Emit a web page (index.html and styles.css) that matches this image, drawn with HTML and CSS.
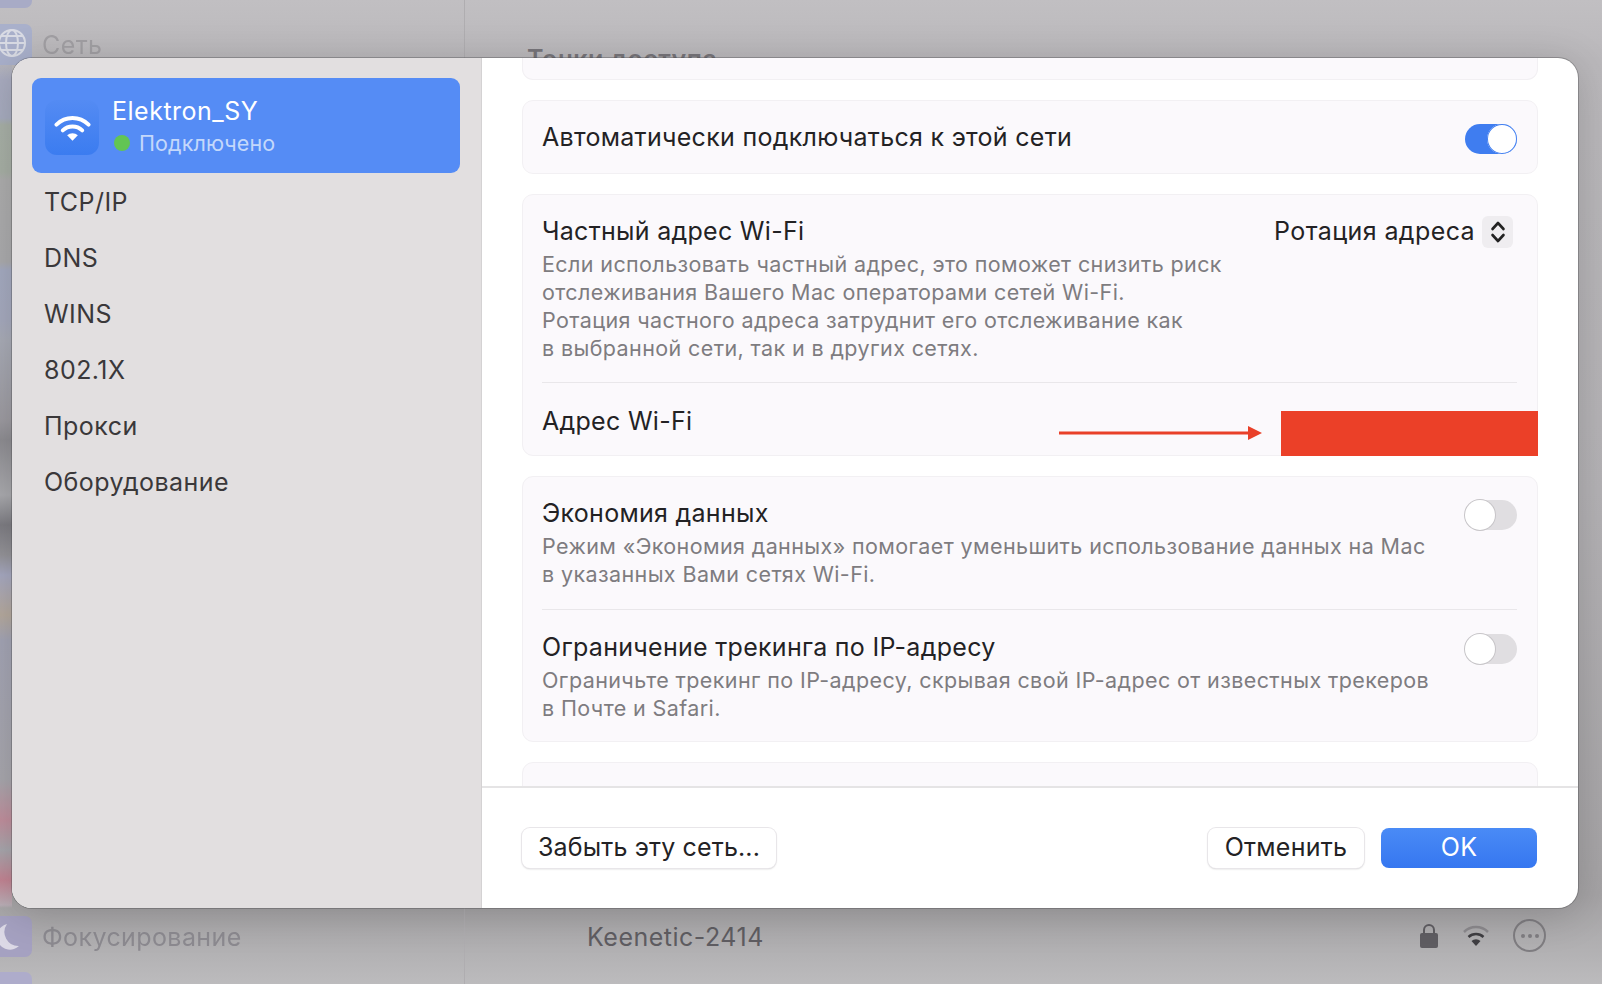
FILE: index.html
```html
<!DOCTYPE html>
<html lang="ru">
<head>
    <meta charset="UTF-8">
    <meta name="viewport" content="width=device-width, initial-scale=1.0">
    <title>Wi-Fi</title>
    <link rel="stylesheet" href="styles.css">
</head>
<body>

    <!-- окно настроек за диалогом -->
    <div class="backdrop">
        <div class="back-side">
            <div class="back-side-group">
                <div class="back-stub back-stub-top"></div>
                <div class="back-side-item back-side-net">
                    <svg class="back-icon" viewBox="0 0 32 41"><rect x="-8" width="40" height="41" rx="7" fill="#a9b0cb"/><g fill="none" stroke="#d9dbe4" stroke-width="2"><circle cx="12" cy="19" r="13"/><ellipse cx="12" cy="19" rx="6" ry="13"/><path d="M-1 19h26M1 12h22M1 26h22"/></g></svg>
                    <span>Сеть</span>
                </div>
            </div>
            <div class="back-side-group">
                <div class="back-side-item back-side-focus">
                    <svg class="back-icon" viewBox="0 0 32 41"><rect x="-8" width="40" height="41" rx="7" fill="#a5a1c1"/><path d="M7 8a13 13 0 1 0 12 22A14 14 0 0 1 7 8z" fill="#dcd9e6"/></svg>
                    <span>Фокусирование</span>
                </div>
                <div class="back-stub back-stub-bottom"></div>
            </div>
        </div>
        <div class="back-main">
            <div class="back-heading">Точки доступа</div>
            <div class="back-row">
                <span>Keenetic-2414</span>
                <div class="back-row-icons">
                    <svg class="icon-lock" viewBox="0 0 20 26"><path d="M5 11V7a5 5 0 0 1 10 0v4" fill="none" stroke="#5f5d62" stroke-width="2"/><rect x="1" y="10" width="18" height="15" rx="2" fill="#5f5d62"/></svg>
                    <svg class="icon-net" viewBox="0 0 28 22"><path d="M2 7a17 17 0 0 1 24 0" fill="none" stroke="#8b898d" stroke-width="2.5"/><path d="M6.500 12a11 11 0 0 1 15 0" fill="none" stroke="#3f3e42" stroke-width="2.500"/><path d="M14 21l-4.500-5a6.500 6.500 0 0 1 9 0z" fill="#3f3e42"/></svg>
                    <div class="icon-more"><i></i><i></i><i></i></div>
                </div>
            </div>
        </div>
    </div>

    <div class="dialog">
        <aside class="sidebar">
            <div class="network">
                <div class="network-icon">
                    <svg viewBox="0 0 38 28"><path d="M2.500 10.500a23.500 23.500 0 0 1 33 0" fill="none" stroke="#fff" stroke-width="4" stroke-linecap="round"/><path d="M9 16.500a14.500 14.500 0 0 1 20 0" fill="none" stroke="#fff" stroke-width="4" stroke-linecap="round"/><path d="M19 27l-5.500-5.500a8 8 0 0 1 11 0z" fill="#fff"/></svg>
                </div>
                <div class="network-text">
                    <div class="network-name">Elektron_SY</div>
                    <div class="network-status"><span class="status-dot"></span>Подключено</div>
                </div>
            </div>
            <nav class="side-nav">
                <a>TCP/IP</a>
                <a>DNS</a>
                <a>WINS</a>
                <a>802.1X</a>
                <a>Прокси</a>
                <a>Оборудование</a>
            </nav>
        </aside>

        <section class="content">
            <div class="scroll">
                <div class="card card-stub-top"></div>

                <div class="card">
                    <div class="row row-auto">
                        <div class="row-title">Автоматически подключаться к этой сети</div>
                        <span class="toggle toggle-on"></span>
                    </div>
                </div>

                <div class="card">
                    <div class="row row-private">
                        <div class="row-text">
                            <div class="row-title">Частный адрес Wi-Fi</div>
                            <p class="row-desc">Если использовать частный адрес, это поможет снизить риск<br>отслеживания Вашего Mac операторами сетей Wi-Fi.<br>Ротация частного адреса затруднит его отслеживание как<br>в выбранной сети, так и в других сетях.</p>
                        </div>
                        <div class="select">
                            <span>Ротация адреса</span>
                            <span class="stepper">
                                <svg viewBox="0 0 16 24"><path d="M2.500 9L8 3l5.500 6M2.500 15L8 21l5.500-6" fill="none" stroke="#222" stroke-width="2.600" stroke-linecap="round" stroke-linejoin="round"/></svg>
                            </span>
                        </div>
                    </div>
                    <div class="row row-address">
                        <div class="row-title">Адрес Wi-Fi</div>
                        <div class="mark">
                            <svg class="mark-arrow" viewBox="0 0 203 14"><path d="M0 5.500h190v3H0z" fill="#e94029"/><path d="M189 0l14 7-14 7z" fill="#e94029"/></svg>
                            <div class="mark-box"></div>
                        </div>
                    </div>
                </div>

                <div class="card">
                    <div class="row row-option">
                        <div class="row-text">
                            <div class="row-title">Экономия данных</div>
                            <p class="row-desc">Режим «Экономия данных» помогает уменьшить использование данных на Mac<br>в указанных Вами сетях Wi-Fi.</p>
                        </div>
                        <span class="toggle"></span>
                    </div>
                    <div class="row row-option row-option-last">
                        <div class="row-text">
                            <div class="row-title">Ограничение трекинга по IP-адресу</div>
                            <p class="row-desc">Ограничьте трекинг по IP-адресу, скрывая свой IP-адрес от известных трекеров<br>в Почте и Safari.</p>
                        </div>
                        <span class="toggle"></span>
                    </div>
                </div>

                <div class="card card-stub-bottom"></div>
            </div>

            <footer class="footer">
                <button type="button" class="btn btn-forget">Забыть эту сеть...</button>
                <div class="footer-right">
                    <button type="button" class="btn">Отменить</button>
                    <button type="button" class="btn btn-ok">OK</button>
                </div>
            </footer>
        </section>
    </div>

</body>
</html>
```

FILE: styles.css
```css
/* базовые стили */
* {
    box-sizing: border-box;
}

html, body {
    height: 100%;
}

body {
    margin: 0;
    overflow: hidden;
    font-family: Inter, "Noto Sans", "Liberation Sans", sans-serif;
    color: #232224;
}

/* окно за диалогом */
.backdrop {
    display: flex;
    height: 100%;
    background: linear-gradient(180deg, #c1bfc2 0%, #bab8bb 6%, #b4b2b5 50%, #a5a3a5 91%, #b3b2b4 97%, #bcbbbd 100%);
}

.back-side {
    width: 465px;
    flex-shrink: 0;
    display: flex;
    flex-direction: column;
    justify-content: space-between;
    border-right: 1px solid #afadb0;
    /* размытые иконки у левого края, видны полоской рядом с диалогом */
    background: linear-gradient(180deg, transparent 0, transparent 58px, #a9acc0 80px, #a8adc0 118px, #a9b1a8 125px, #a8b0a6 172px, #aeaeae 180px, #acacae 262px, #a6acc2 270px, #a7abbf 320px, #aaadb8 340px, #9e9ca2 420px, #8f8e93 440px, #acacb0 495px, #7f7e84 525px, #96959a 555px, #a8aac2 575px, #b7ab9f 615px, #a5a6b6 640px, #a9a8ae 780px, #c2909e 820px, #a9a8ae 850px, #c48594 880px, #b9adb5 905px, transparent 908px) 0 0 / 12px 100% no-repeat;
}

.back-stub {
    width: 32px;
    background: #a8abc6;
}

.back-stub-top {
    height: 8px;
    margin-bottom: 16px;
    border-radius: 0 0 7px 0;
}

.back-stub-bottom {
    height: 12px;
    margin-top: 15px;
    background: #aeaccb;
    border-radius: 0 7px 0 0;
}

.back-side-item {
    display: flex;
    align-items: center;
    gap: 10px;
    font-size: 25px;
    letter-spacing: 0.4px;
    color: #a19fa3;
}

.back-side-item span {
    filter: blur(0.6px);
}

.back-side-focus {
    color: #8c8a90;
}

.back-icon {
    width: 32px;
    height: 41px;
    flex-shrink: 0;
    filter: blur(0.6px);
}

.back-main {
    flex: 1;
    display: flex;
    flex-direction: column;
    justify-content: space-between;
    padding: 44px 56px 32px 122px;
}

.back-heading {
    margin-left: -60px;
    font-size: 25px;
    font-weight: 600;
    letter-spacing: 0.5px;
    color: #77757a;
}

.back-row {
    display: flex;
    justify-content: space-between;
    align-items: center;
    font-size: 25px;
    letter-spacing: 0.5px;
    color: #5f5d62;
}

.back-row-icons {
    display: flex;
    align-items: center;
    gap: 23px;
    margin-top: -2px;
}

.icon-lock {
    width: 20px;
    height: 26px;
}

.icon-net {
    width: 28px;
    height: 22px;
}

.icon-more {
    width: 33px;
    height: 33px;
    display: flex;
    align-items: center;
    justify-content: center;
    gap: 3px;
    border: 2px solid #7f7d81;
    border-radius: 50%;
}

.icon-more i {
    width: 4px;
    height: 4px;
    border-radius: 50%;
    background: #7f7d81;
}

/* диалог */
.dialog {
    position: absolute;
    left: 12px;
    top: 58px;
    width: 1566px;
    height: 850px;
    display: flex;
    overflow: hidden;
    background: #fff;
    border-radius: 20px;
    box-shadow: 0 0 0 1px rgba(70, 68, 72, 0.35), 0 6px 40px rgba(0, 0, 0, 0.18);
}

.sidebar {
    width: 470px;
    flex-shrink: 0;
    padding: 20px 21px 0 20px;
    background: #e2dfe0;
    border-right: 1px solid #d4d2d3;
}

.network {
    height: 95px;
    display: flex;
    align-items: center;
    gap: 13px;
    padding: 0 13px;
    background: #558cf5;
    border-radius: 9px;
    color: #fff;
}

.network-icon {
    width: 54px;
    height: 55px;
    margin-top: 4px;
    display: flex;
    align-items: center;
    justify-content: center;
    flex-shrink: 0;
    background: linear-gradient(180deg, #548bf3 0%, #3b7cf0 100%);
    border-radius: 12px;
}

.network-icon svg {
    width: 37px;
    height: 28px;
}

.network-text {
    padding-top: 2px;
}

.network-name {
    font-size: 25px;
    line-height: 30px;
    letter-spacing: 0.5px;
}

.network-status {
    display: flex;
    align-items: center;
    gap: 9px;
    margin-top: 3px;
    font-size: 21.500px;
    line-height: 28px;
    letter-spacing: 0.1px;
    color: #c4d8fb;
}

.status-dot {
    width: 16px;
    height: 16px;
    margin-left: 2px;
    background: #62c554;
    border-radius: 50%;
}

.side-nav {
    display: flex;
    flex-direction: column;
    padding: 1px 0 0 12px;
}

.side-nav a {
    height: 56px;
    display: flex;
    align-items: center;
    font-size: 25px;
    letter-spacing: 0.45px;
    color: #3a383a;
}

/* правая часть */
.content {
    flex: 1;
    min-width: 0;
    display: flex;
    flex-direction: column;
}

.scroll {
    height: 730px;
    overflow: hidden;
    display: flex;
    flex-direction: column;
    gap: 20px;
    padding: 0 40px;
    border-bottom: 2px solid #e5e4e5;
}

.card {
    flex-shrink: 0;
    background: #fbf9fc;
    border: 1px solid #f2f0f3;
    border-radius: 11px;
}

.card-stub-top {
    height: 23px;
    margin-top: -1px;
    border-top: none;
    border-radius: 0 0 11px 11px;
}

.card-stub-bottom {
    height: 40px;
}

.row {
    display: flex;
    justify-content: space-between;
    margin: 0 20px 0 19px;
}

.row + .row {
    border-top: 1px solid #e9e7ea;
}

.row-title {
    font-size: 25px;
    line-height: 32px;
    letter-spacing: 0.29px;
}

.row-desc {
    margin: 3px 0 0;
    font-size: 21.500px;
    line-height: 28px;
    letter-spacing: 0.39px;
    color: #7e7c80;
}

.row-auto {
    height: 72px;
    align-items: center;
}

.row-private {
    height: 187px;
    padding-top: 20px;
}

.row-address {
    height: 73px;
    padding-top: 22px;
}

.row-option {
    height: 132px;
    padding-top: 20px;
}

.row-option-last {
    padding-top: 21px;
}

.select {
    display: flex;
    align-items: flex-start;
    gap: 7px;
    padding-right: 4px;
    font-size: 25px;
    line-height: 32px;
    letter-spacing: 0.4px;
}

.stepper {
    width: 31px;
    height: 32px;
    margin-top: 1px;
    display: flex;
    align-items: center;
    justify-content: center;
    background: #efedf0;
    border-radius: 6px;
}

.stepper svg {
    width: 16px;
    height: 24px;
}

.toggle {
    width: 52px;
    height: 30px;
    margin: 3px 0 0;
    flex-shrink: 0;
    display: flex;
    background: #e0dee1;
    border-radius: 15px;
}

.toggle::before {
    content: "";
    width: 30px;
    height: 30px;
    background: #fff;
    border-radius: 50%;
    box-shadow: 0 0 0 1px #c7c5c8;
}

.toggle-on {
    justify-content: flex-end;
    background: #3f7df0;
}

.toggle-on::before {
    box-shadow: inset 0 0 0 1px #3f7df0;
}

/* красная метка поверх адреса */
.mark {
    display: flex;
    align-items: flex-end;
    gap: 19px;
    margin: 0 -21px -1px 0;
}

.mark-arrow {
    width: 203px;
    height: 14px;
    margin-bottom: 16px;
}

.mark-box {
    width: 257px;
    height: 45px;
    background: #eb4028;
}

/* кнопки */
.footer {
    flex: 1;
    display: flex;
    align-items: center;
    justify-content: space-between;
    padding: 0 41px 0 40px;
}

.footer-right {
    display: flex;
    gap: 17px;
}

.btn {
    width: 156px;
    height: 40px;
    padding: 0 0 2px;
    background: #fff;
    border: none;
    border-radius: 8px;
    box-shadow: 0 0 0 1px #e8e6e9, 0 1px 2px rgba(0, 0, 0, 0.22);
    font-family: inherit;
    font-size: 25px;
    letter-spacing: 0.25px;
    color: #232224;
}

.btn-forget {
    width: 254px;
    letter-spacing: 0.15px;
}

.btn-ok {
    background: linear-gradient(180deg, #4a8bf6 0%, #3677f0 100%);
    box-shadow: none;
    color: #fff;
}
```
